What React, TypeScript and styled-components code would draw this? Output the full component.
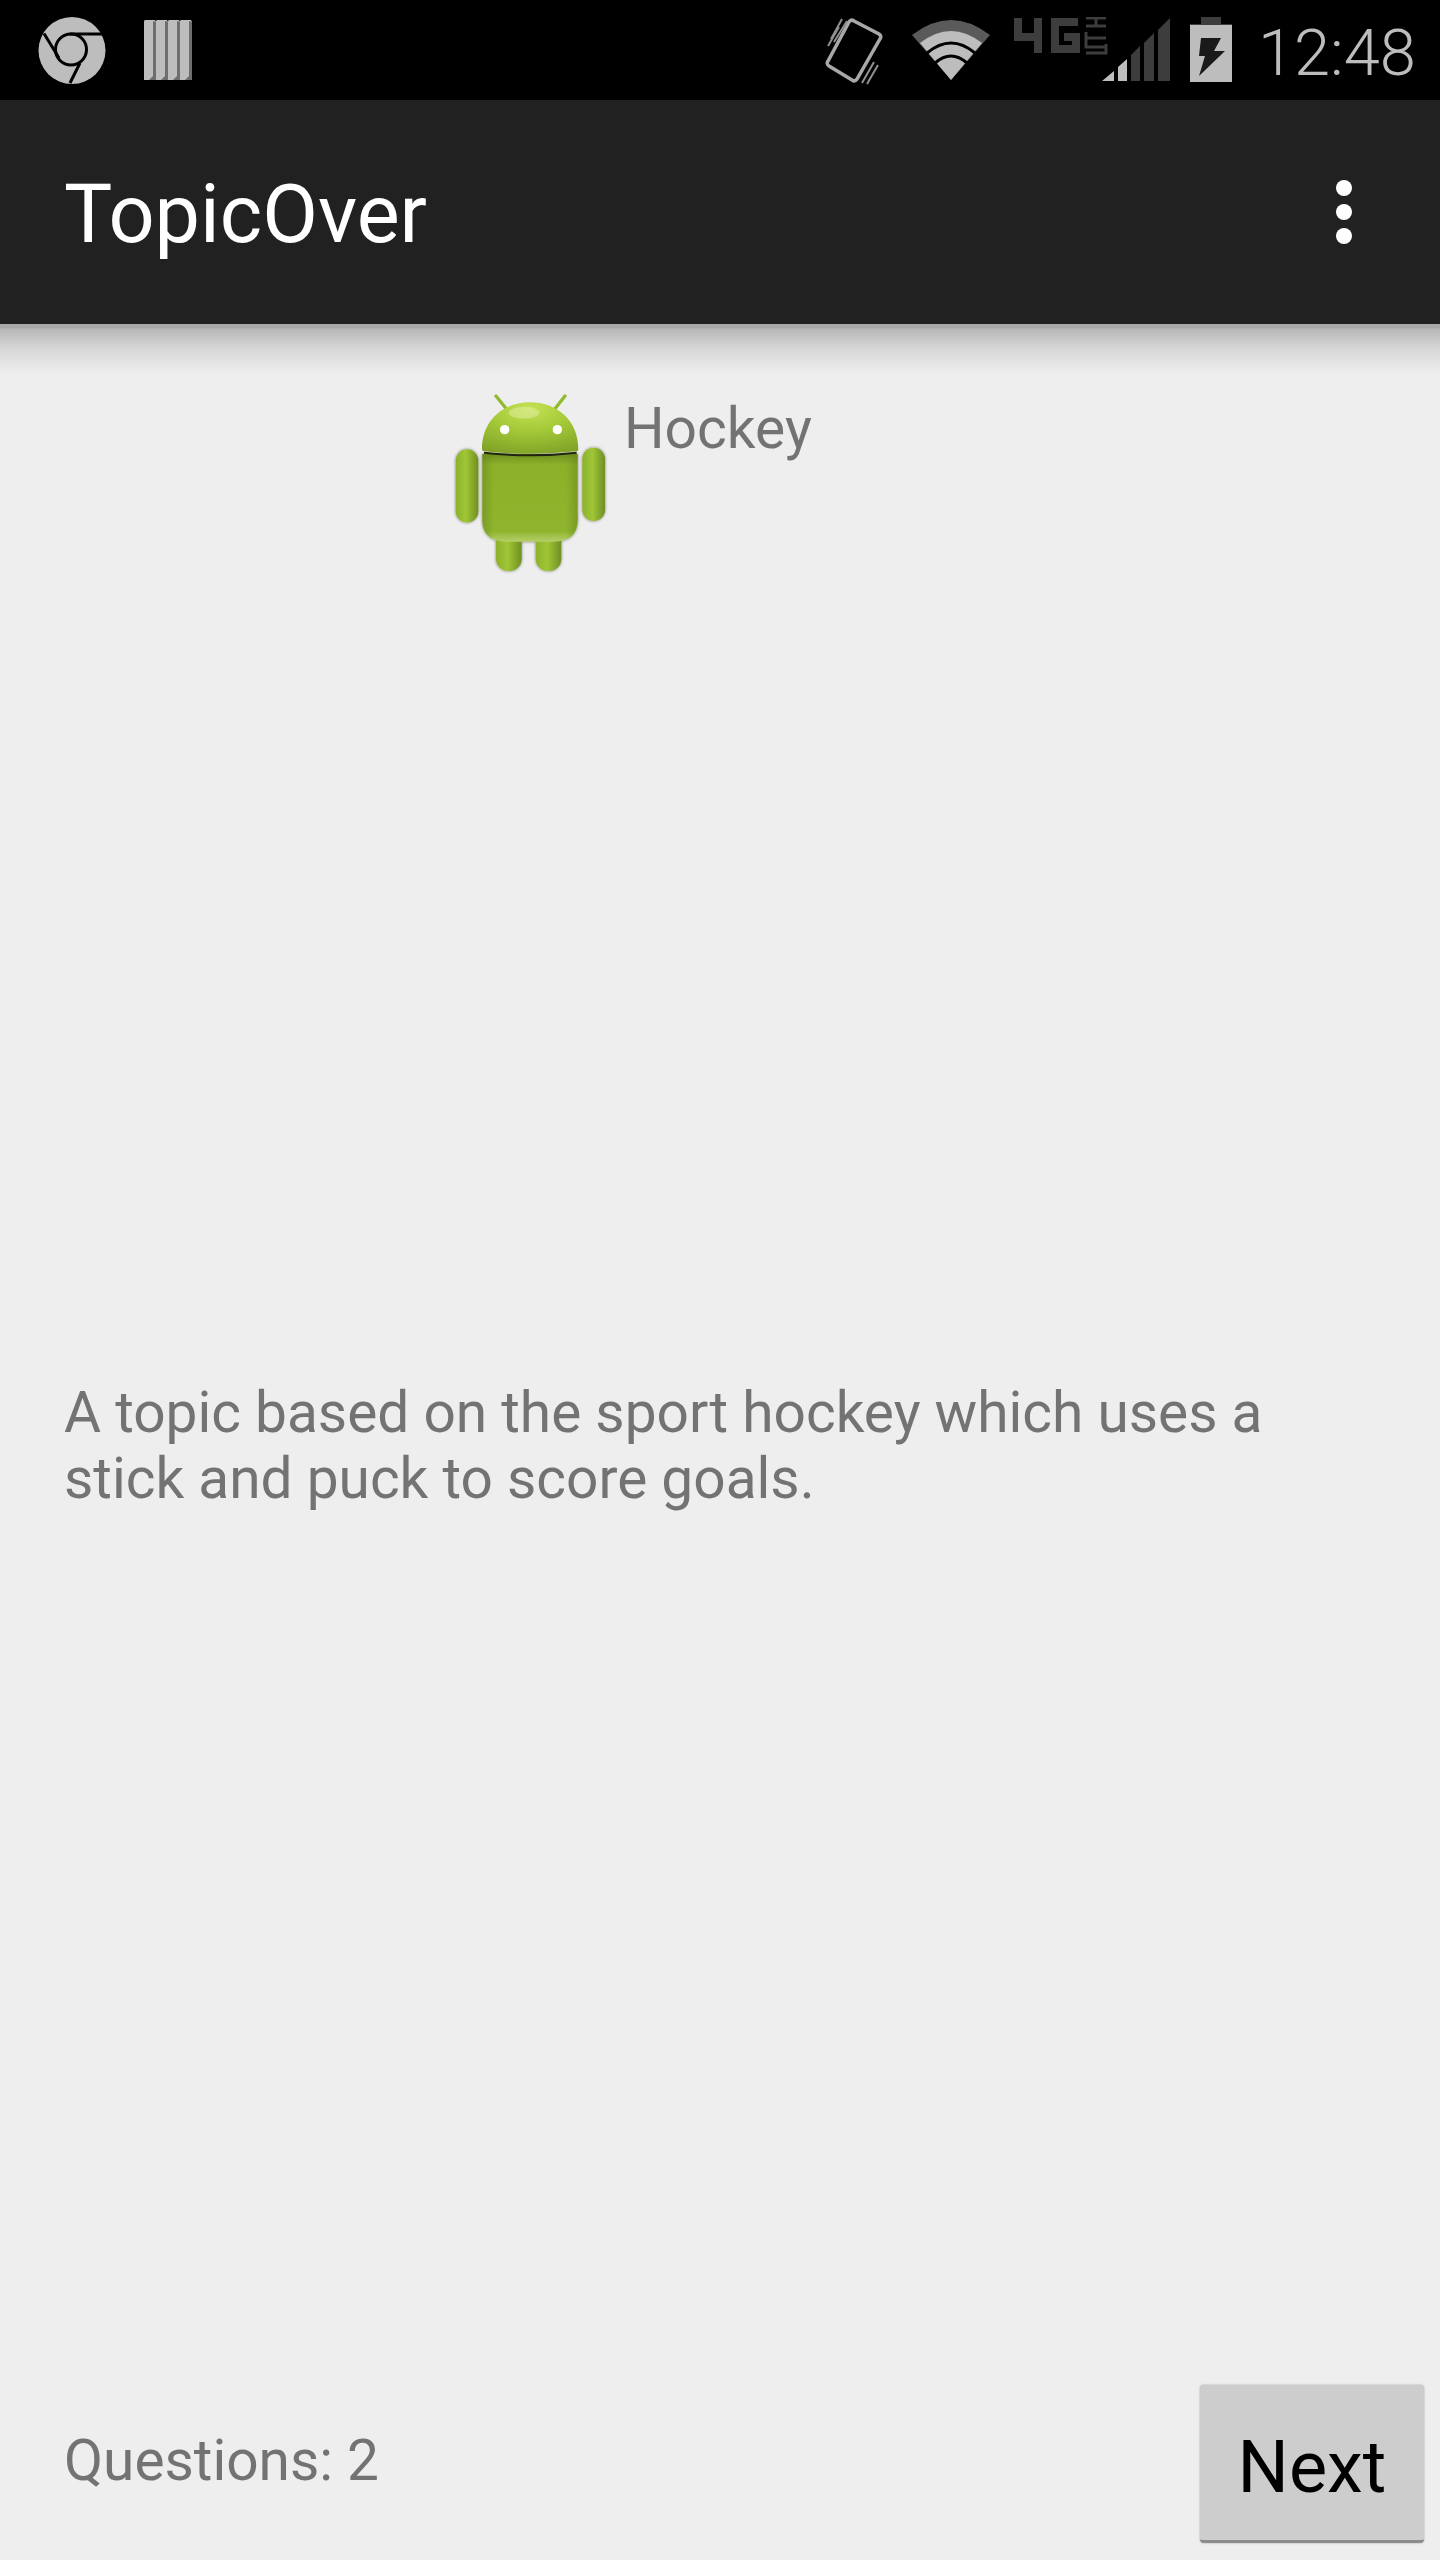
import styled, { createGlobalStyle } from "styled-components";

const GlobalStyle = createGlobalStyle`
  html, body {
    margin: 0;
    padding: 0;
    background: #eeeeee;
  }
`;

const Page = styled.div`
  display: flex;
  flex-direction: column;
  width: 1440px;
  height: 2560px;
  overflow: hidden;
  font-family: Roboto, "Liberation Sans", sans-serif;
`;

const StatusBar = styled.div`
  display: flex;
  align-items: flex-start;
  flex: 0 0 100px;
  box-sizing: border-box;
  padding: 17px 0 0 38px;
  background: #000000;
`;

const StatusIcon = styled.svg<{ $left: number; $top?: number }>`
  display: block;
  flex: none;
  margin-left: ${(p) => p.$left}px;
  margin-top: ${(p) => p.$top ?? 0}px;
`;

const Clock = styled.span`
  margin-left: 26px;
  margin-top: -6px;
  color: #bdbdbd;
  font-size: 65px;
  font-weight: 300;
  line-height: 84px;
`;

const ActionBar = styled.header`
  display: flex;
  align-items: center;
  justify-content: space-between;
  flex: 0 0 224px;
  box-sizing: border-box;
  padding: 0 88px 0 64px;
  background: #212121;
`;

const Title = styled.h1`
  margin: 5px 0 0;
  color: #ffffff;
  font-size: 81px;
  font-weight: 400;
  line-height: 94px;
`;

const Overflow = styled.div`
  display: flex;
  flex-direction: column;
  gap: 8px;
`;

const Dot = styled.span`
  width: 16px;
  height: 16px;
  border-radius: 50%;
  background: #ffffff;
`;

const Content = styled.main`
  display: flex;
  flex-direction: column;
  flex: 1;
  background:
    linear-gradient(#a9a9a9 0, #a9a9a9 4px, #b8b8b8 5px, #d6d6d6 24px, #eeeeee 50px) top / 100% 50px no-repeat,
    #eeeeee;
`;

const TopicRow = styled.div`
  display: flex;
  align-items: flex-start;
  gap: 16px;
  padding: 68px 0 0 452px;
`;

const TopicName = styled.span`
  margin-top: 4px;
  color: #737373;
  font-size: 56.9px;
  line-height: 66px;
`;

const Description = styled.p`
  margin: 805px 64px 0;
  color: #737373;
  font-size: 56.8px;
  line-height: 66px;
`;

const Footer = styled.footer`
  display: flex;
  align-items: center;
  justify-content: space-between;
  margin-top: auto;
  padding: 0 16px 17px 64px;
`;

const QuestionCount = styled.span`
  margin-top: -6px;
  color: #737373;
  font-size: 56.8px;
  line-height: 66px;
`;

const NextButton = styled.button`
  width: 224px;
  height: 158px;
  padding: 10px 0 0;
  border: none;
  border-radius: 4px;
  border-bottom: 3px solid #8c8c8c;
  background: #cdcdcd;
  box-shadow: 0 0 2px rgba(0, 0, 0, 0.35);
  color: #000000;
  font-family: inherit;
  font-size: 72px;
`;

const ChromeIcon = () => (
  <StatusIcon $left={0} width={68} height={67} viewBox="0 0 68 67">
    <circle cx="34" cy="33.5" r="33.5" fill="#bdbdbd" />
    <circle cx="33" cy="32.5" r="15.5" fill="none" stroke="#000" strokeWidth="3" />
    <path d="M6 16.5 L21 41 M32 17 H64 M42 46 L32 66" fill="none" stroke="#000" strokeWidth="3" />
  </StatusIcon>
);

const BooksIcon = () => (
  <StatusIcon $left={38} $top={3} width={48} height={60} viewBox="0 0 48 60">
    {[0, 12, 24, 36].map((x) => (
      <g key={x}>
        <path d={`M${x + 1} 0 H${x + 11} L${x + 12} 2 V60 H${x} V1 Z`} fill="#bdbdbd" />
        <path d={`M${x + 9} 1 L${x + 12} 2 V60 H${x + 5} L${x + 9} 56 Z`} fill="#6e6e6e" />
      </g>
    ))}
  </StatusIcon>
);

const VibrateIcon = () => (
  <StatusIcon $left={633} width={58} height={68} viewBox="0 0 58 68">
    <path
      d="M24 5 Q26 2 29 4 L54 17 Q57 19 55 22 L32 62 Q30 65 27 63 L4 49 Q1 47 3 44 Z"
      fill="none"
      stroke="#a8a8a8"
      strokeWidth="3.5"
    />
    <path
      d="M17 2 L6 22 M22 4 L9 25 M14 10 L3 29 M37 66 L49 45 M42 67 L53 48"
      fill="none"
      stroke="#8f8f8f"
      strokeWidth="2"
    />
  </StatusIcon>
);

const WifiIcon = () => (
  <StatusIcon $left={29} $top={3} width={78} height={60} viewBox="0 0 78 60">
    <path d="M0 15 Q39 -15 78 15 L39 60 Z" fill="#5a5a5a" />
    <path d="M8 23 Q39 -1 70 23 L39 60 Z" fill="#bdbdbd" />
    <path d="M15 33 Q39 13 63 33 M23 43 Q39 29 55 43" fill="none" stroke="#000" strokeWidth="3" />
  </StatusIcon>
);

const NetworkIcon = () => (
  <StatusIcon $left={24} width={162} height={66} viewBox="0 0 162 66">
    <g fill="none" stroke="#3d3d3d" strokeWidth="8">
      <path d="M4 1 V20 H26 M24 1 V36" />
      <path d="M64 5 H41 V32 H62 V20 H50" />
    </g>
    <g fill="none" stroke="#3d3d3d" strokeWidth="3">
      <path d="M72 1 H92 M72 9 H92 M82 9 V1" />
      <path d="M72 15 V30 H92" />
      <path d="M72 21 H92" />
      <path d="M72 36 H92 V27" />
    </g>
    <path d="M88 64 L100 54 V64 Z" fill="#bdbdbd" />
    <path d="M104 50 L113 42 V64 H104 Z" fill="#bdbdbd" />
    <path d="M117 38 L126 29 V64 H117 Z" fill="#3d3d3d" />
    <path d="M130 26 L140 16 V64 H130 Z" fill="#3d3d3d" />
    <path d="M144 13 L156 1 V64 H144 Z" fill="#3d3d3d" />
  </StatusIcon>
);

const BatteryIcon = () => (
  <StatusIcon $left={14} width={42} height={65} viewBox="0 0 42 65">
    <path d="M11 0 H31 V7 H42 V20 H0 V7 H11 Z" fill="#3d3d3d" />
    <rect x="0" y="8" width="42" height="57" fill="#bdbdbd" />
    <path d="M11 21 H31 L24 34 H35 L9 59 L15 39 H9 Z" fill="#1a1a1a" />
  </StatusIcon>
);

const AndroidImage = styled.svg`
  display: block;
  flex: none;
`;

const AndroidIcon = () => (
  <AndroidImage width={156} height={183} viewBox="96 66 468 549">
    <defs>
      <radialGradient id="head" cx="0.5" cy="0.12" r="0.95">
        <stop offset="0" stopColor="#c5e055" />
        <stop offset="0.45" stopColor="#a4ca38" />
        <stop offset="1" stopColor="#7fa026" />
      </radialGradient>
      <linearGradient id="body" x1="0" y1="0" x2="0" y2="1">
        <stop offset="0" stopColor="#6f9020" />
        <stop offset="0.12" stopColor="#8bb12b" />
        <stop offset="0.88" stopColor="#8fb52d" />
        <stop offset="1" stopColor="#b4cf6b" />
      </linearGradient>
      <linearGradient id="bodyEdge" x1="0" y1="0" x2="1" y2="0">
        <stop offset="0" stopColor="#5f7d18" stopOpacity="0.45" />
        <stop offset="0.12" stopColor="#5f7d18" stopOpacity="0" />
        <stop offset="0.88" stopColor="#5f7d18" stopOpacity="0" />
        <stop offset="1" stopColor="#5f7d18" stopOpacity="0.45" />
      </linearGradient>
      <linearGradient id="limb" x1="0" y1="0" x2="1" y2="0">
        <stop offset="0" stopColor="#8cb12c" />
        <stop offset="0.45" stopColor="#a0c636" />
        <stop offset="1" stopColor="#6f8f22" />
      </linearGradient>
      <filter id="soft" x="-20%" y="-20%" width="140%" height="140%">
        <feDropShadow dx="0" dy="0" stdDeviation="5" floodColor="#000" floodOpacity="0.5" />
      </filter>
    </defs>
    <g filter="url(#soft)">
      <rect x="228" y="470" width="77" height="133" rx="36" fill="url(#limb)" />
      <rect x="347" y="470" width="77" height="133" rx="36" fill="url(#limb)" />
      <rect x="107" y="238" width="68" height="220" rx="34" fill="url(#limb)" />
      <rect x="487" y="233" width="68" height="220" rx="34" fill="url(#limb)" />
      <path d="M187 252 H473 V450 Q473 515 400 515 H260 Q187 515 187 450 Z" fill="url(#body)" />
    </g>
    <path d="M187 252 H473 V450 Q473 515 400 515 H260 Q187 515 187 450 Z" fill="url(#bodyEdge)" />
    <path d="M228 78 L262 120 M435 78 L402 120" stroke="#93b92f" strokeWidth="10" strokeLinecap="round" />
    <path d="M186 238 C186 150 250 97 330 97 C410 97 475 150 475 238 Q475 244 470 244 Q330 258 192 244 Q186 244 186 238 Z" fill="url(#head)" />
    <path d="M192 248 Q330 264 470 248" fill="none" stroke="#20260c" strokeWidth="6" />
    <ellipse cx="312" cy="128" rx="46" ry="18" fill="#e3f0a8" opacity="0.5" />
    <circle cx="254" cy="179" r="14" fill="#ffffff" />
    <circle cx="412" cy="179" r="14" fill="#ffffff" />
  </AndroidImage>
);

export default function App() {
  return (
    <Page>
      <GlobalStyle />
      <StatusBar>
        <ChromeIcon />
        <BooksIcon />
        <VibrateIcon />
        <WifiIcon />
        <NetworkIcon />
        <BatteryIcon />
        <Clock>12:48</Clock>
      </StatusBar>
      <ActionBar>
        <Title>TopicOver</Title>
        <Overflow>
          <Dot />
          <Dot />
          <Dot />
        </Overflow>
      </ActionBar>
      <Content>
        <TopicRow>
          <AndroidIcon />
          <TopicName>Hockey</TopicName>
        </TopicRow>
        <Description>
          A topic based on the sport hockey which uses a
          <br />
          stick and puck to score goals.
        </Description>
        <Footer>
          <QuestionCount>Questions: 2</QuestionCount>
          <NextButton>Next</NextButton>
        </Footer>
      </Content>
    </Page>
  );
}
